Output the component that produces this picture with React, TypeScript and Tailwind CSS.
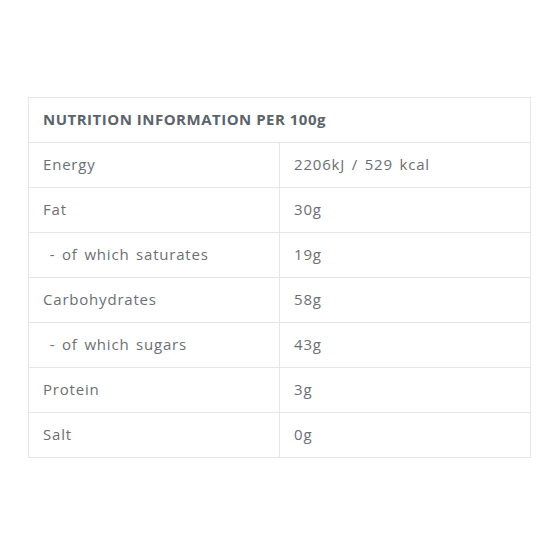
const rows: [string, string][] = [
  ['Energy', '2206kJ / 529 kcal'],
  ['Fat', '30g'],
  ['\u00a0- of which saturates', '19g'],
  ['Carbohydrates', '58g'],
  ['\u00a0- of which sugars', '43g'],
  ['Protein', '3g'],
  ['Salt', '0g'],
];

export default function App() {
  return (
    <div
      className="w-[560px] h-[560px] bg-white pt-[97px] pl-[28px]"
      style={{ fontFamily: '"Open Sans", "Liberation Sans", sans-serif' }}
    >
      <table className="w-[503px] border-collapse text-[15px] text-[#6b6f75] tracking-[0.8px] [word-spacing:2px]">
        <thead>
          <tr className="h-[45px]">
            <th
              colSpan={2}
              className="border border-[#e6e6e6] px-[14px] pb-px text-left font-bold tracking-[0.5px] [word-spacing:0px] text-[#5c636b]"
            >
              NUTRITION INFORMATION PER 100g
            </th>
          </tr>
        </thead>
        <tbody>
          {rows.map(([label, value]) => (
            <tr key={label} className="h-[45px]">
              <td className="w-[251px] border border-[#e6e6e6] px-[14px] pb-px">{label}</td>
              <td className="border border-[#e6e6e6] px-[14px] pb-px">{value}</td>
            </tr>
          ))}
        </tbody>
      </table>
    </div>
  );
}
